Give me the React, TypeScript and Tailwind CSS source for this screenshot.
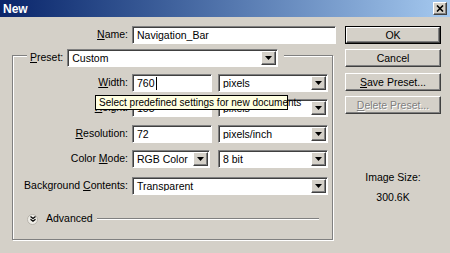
import React from 'react';

const sunken =
  'border border-t-[#808080] border-l-[#808080] border-b-white border-r-white shadow-[inset_1px_1px_0_#404040] bg-white';
const raised =
  'border border-t-white border-l-white border-b-[#404040] border-r-[#404040] shadow-[inset_-1px_-1px_0_#808080] bg-[#d4d0c8]';

const Arrow = () => (
  <div className={`${raised} w-[15px] h-full flex items-center justify-center shrink-0`}>
    <svg width="7" height="4" viewBox="0 0 7 4">
      <path d="M0 0h7L3.5 4z" fill="#000" />
    </svg>
  </div>
);

const Select = ({ value, className }: { value: string; className: string }) => (
  <div className={`${sunken} ${className} h-[18px] flex items-center p-[1px]`}>
    <span className="flex-1 pl-[3px] leading-none whitespace-nowrap overflow-hidden">{value}</span>
    <Arrow />
  </div>
);

const Input = ({ value, className, caret }: { value: string; className: string; caret?: boolean }) => (
  <div className={`${sunken} ${className} h-[18px] flex items-center pl-[4px]`}>
    <span className="leading-none">{value}</span>
    {caret && <span className="w-px h-[13px] bg-black ml-px" />}
  </div>
);

const Label = ({ children }: { children: React.ReactNode }) => (
  <div className="w-[115px] text-right shrink-0">{children}</div>
);

const Row = ({ label, children, mt }: { label: React.ReactNode; children: React.ReactNode; mt: string }) => (
  <div className={`flex items-center gap-[4px] ${mt}`}>
    <Label>{label}</Label>
    {children}
  </div>
);

const U = ({ children }: { children: React.ReactNode }) => <span className="underline">{children}</span>;

const Button = ({ children, def, disabled, mt }: { children: React.ReactNode; def?: boolean; disabled?: boolean; mt?: string }) => (
  <div className={`w-[96px] h-[18px] ${mt ?? ''} ${def ? 'border border-black' : ''}`}>
    <div
      className={`${raised} w-full h-full flex items-center justify-center leading-none ${
        disabled ? 'text-[#808080] [text-shadow:1px_1px_0_#fff]' : ''
      }`}
    >
      {children}
    </div>
  </div>
);

export default function App() {
  return (
    <div className="relative w-[450px] h-[253px] overflow-hidden bg-[#d4d0c8] text-[10.5px] text-black font-['Liberation_Sans',Arial,sans-serif]">
      <div className="h-[17px] flex items-center justify-between bg-linear-to-r from-[#0a246a] to-[#a6caf0] pl-[3px] pr-[3px]">
        <span className="text-white font-bold text-[12px]">New</span>
        <div className={`${raised} w-[14px] h-[13px] flex items-center justify-center`}>
          <svg width="8" height="7" viewBox="0 0 8 7">
            <path d="M1 0.5L7 6.5M7 0.5L1 6.5" stroke="#000" strokeWidth="1.6" />
          </svg>
        </div>
      </div>

      <div className="flex">
        <div className="w-[340px] pt-[9px]">
          <div className="flex items-center gap-[4px]">
            <div className="w-[128px] text-right">
              <U>N</U>ame:
            </div>
            <Input value="Navigation_Bar" className="w-[204px]" />
          </div>

          <div className="ml-[12px] mt-[11px] w-[321px] h-[185px] border border-[#808080] shadow-[1px_1px_0_#fff,inset_1px_1px_0_#fff]">
            <div className="-mt-[7px] ml-[14px] w-fit flex items-center gap-[4px] bg-[#d4d0c8] pl-[3px] pr-[6px]">
              <span>
                <U>P</U>reset:
              </span>
              <Select value="Custom" className="w-[211px]" />
            </div>

            <Row label={<><U>W</U>idth:</>} mt="mt-[7px]">
              <Input value="760" caret className="w-[80px]" />
              <Select value="pixels" className="w-[110px] ml-[2px]" />
            </Row>
            <Row label={<><U>H</U>eight:</>} mt="mt-[7px]">
              <Input value="155" className="w-[80px]" />
              <Select value="pixels" className="w-[110px] ml-[2px]" />
            </Row>
            <Row label={<><U>R</U>esolution:</>} mt="mt-[8px]">
              <Input value="72" className="w-[80px]" />
              <Select value="pixels/inch" className="w-[110px] ml-[2px]" />
            </Row>
            <Row label={<>Color <U>M</U>ode:</>} mt="mt-[7px]">
              <Select value="RGB Color" className="w-[78px]" />
              <Select value="8 bit" className="w-[110px] ml-[4px]" />
            </Row>
            <Row label={<span className="whitespace-nowrap">Background <U>C</U>ontents:</span>} mt="mt-[9px]">
              <Select value="Transparent" className="w-[196px]" />
            </Row>

            <div className="mt-[17px] ml-[14px] flex items-center h-[14px]">
              <div className="w-[11px] h-[11px] rounded-full bg-[#eeece6] border border-[#b8b4ac] flex items-center justify-center">
                <svg width="6" height="6" viewBox="0 0 6 6">
                  <path d="M0.5 0.5L3 2.5L5.5 0.5M0.5 3.2L3 5.2L5.5 3.2" stroke="#000" strokeWidth="1.2" fill="none" />
                </svg>
              </div>
              <span className="ml-[8px]">Advanced</span>
              <div className="ml-[4px] w-[222px] h-[2px] border-t border-[#808080] border-b border-b-white" />
            </div>
          </div>
        </div>

        <div className="ml-[5px] pt-[9px] flex flex-col items-center">
          <Button def>OK</Button>
          <Button mt="mt-[5px]">Cancel</Button>
          <Button mt="mt-[6px]">
            <span>
              <U>S</U>ave Preset...
            </span>
          </Button>
          <Button mt="mt-[5px]" disabled>
            <span>
              <U>D</U>elete Preset...
            </span>
          </Button>
          <div className="mt-[57px] leading-[13px]">Image Size:</div>
          <div className="mt-[7px] leading-[13px]">300.6K</div>
        </div>
      </div>

      <div className="absolute left-[95px] top-[95px] w-[193px] h-[15px] bg-[#ffffe1] border border-black flex items-center pl-[3px] leading-none whitespace-nowrap text-[10px]">
        Select predefined settings for new documents
      </div>
    </div>
  );
}
